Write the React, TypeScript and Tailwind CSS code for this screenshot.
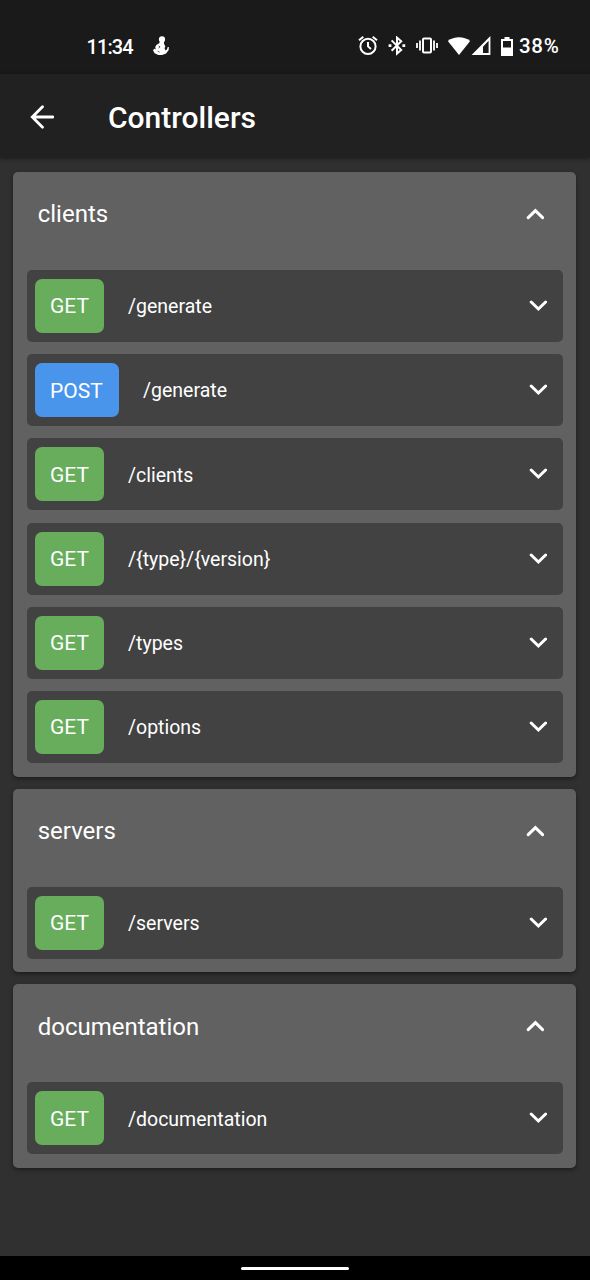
import React from "react";

type Method = "GET" | "POST";
type Endpoint = { method: Method; path: string };
type Controller = { name: string; endpoints: Endpoint[] };

const controllers: Controller[] = [
  {
    name: "clients",
    endpoints: [
      { method: "GET", path: "/generate" },
      { method: "POST", path: "/generate" },
      { method: "GET", path: "/clients" },
      { method: "GET", path: "/{type}/{version}" },
      { method: "GET", path: "/types" },
      { method: "GET", path: "/options" },
    ],
  },
  { name: "servers", endpoints: [{ method: "GET", path: "/servers" }] },
  { name: "documentation", endpoints: [{ method: "GET", path: "/documentation" }] },
];

const badgeStyle: Record<Method, string> = {
  GET: "w-[69px] bg-[#68ad5c]",
  POST: "w-[84px] bg-[#4a95ec]",
};

function Chevron({ up = false }: { up?: boolean }) {
  return (
    <svg viewBox="0 0 18 12" className="h-3 w-[18px] shrink-0" fill="none" stroke="white" strokeWidth="3" strokeLinecap="round">
      <path d={up ? "M2.2 9.6 9.4 2.6l7.2 7" : "M2.2 2 9.4 9l7.2-7"} />
    </svg>
  );
}

function StatusBar() {
  return (
    <div className="flex h-[74px] shrink-0 items-center bg-[#1a1a1a] pt-[18px] pl-[86.5px] text-[20px] font-medium">
      <span className="w-[65.5px] pt-px tracking-[-0.9px]">11:34</span>
      <svg viewBox="0 0 18 20" className="h-5 w-[18px]" fill="white">
        <circle cx="10" cy="3.4" r="3.1" />
        <path d="M8 5.5h4v2.3l1.4 2.7-.9 1.6 1 2.4 1.6-1.3.4-2 1.4-.2-.2 3-2.6 3.5-4 1.5H6.4L2.6 17.2 1 14.2l1.2-1.4 1.6.5-.6-2.2 1.4-2.3 2.6-1.5z" />
        <path d="M6.6 10 8 10.8l-1.4 1.5M5.7 15.3l1.8.8" fill="none" stroke="#1a1a1a" strokeWidth="0.7" />
      </svg>
      <div className="ml-auto flex items-center pr-[29px]">
        <svg viewBox="0 0 20 20" className="h-5 w-5" fill="none" stroke="white" strokeWidth="2">
          <circle cx="10" cy="10.4" r="7.6" />
          <path d="M10 6.1v4.3l3 2.5M1 4.2 5.3.8M19 4.2 14.7.8" />
        </svg>
        <svg viewBox="0 0 18 20" className="ml-2.5 h-5 w-[18px]" fill="none" stroke="white" strokeWidth="2">
          <path d="m3.6 4.4 9.6 9.6L9 17.6v-16l4.2 3.6-9.6 9.6" />
          <path d="M.6 9.6h2.8M14.4 9.6h2.8" strokeWidth="2.8" />
        </svg>
        <svg viewBox="0 0 22 18" className="ml-[10px] h-[18px] w-[22px]" fill="none" stroke="white" strokeWidth="2">
          <rect x="7" y="1.6" width="8" height="14" rx="1" />
          <path d="M4 3.6v10M1 6.1v5M18 3.6v10M21 6.1v5" strokeWidth="1.8" />
        </svg>
        <svg viewBox="0 0 24 19" className="ml-[9px] h-[19px] w-6" fill="white">
          <path d="M.8 4C7-1 17-1 23.2 4L12 18z" />
        </svg>
        <svg viewBox="0 0 20 20" className="h-5 w-5" fill="white">
          <path fillRule="evenodd" d="M19.4 0v19H.6zM17.6 4.7 12 10.7V17h5.6z" />
        </svg>
        <svg viewBox="0 0 12 19" className="ml-2.5 h-[19px] w-3" fill="white">
          <path fillRule="evenodd" d="M3.5 0h5v2H12v17H0V2h3.5zM2 4v6.5h8V4z" />
        </svg>
        <span className="ml-[6px] w-[42px] pt-px text-[20.5px] tracking-[0.7px] whitespace-nowrap">38%</span>
      </div>
    </div>
  );
}

function EndpointRow({ method, path }: Endpoint) {
  return (
    <div className="flex h-[72px] items-center rounded-[5px] bg-[#424242] pr-[16.5px] pl-2">
      <span className={`flex h-[54px] items-center rounded-[7px] pt-[2px] pl-[15px] text-[21px] ${badgeStyle[method]}`}>{method}</span>
      <span className="ml-6 pt-[1.6px] text-[19.5px]">{path}</span>
      <div className="ml-auto flex">
        <Chevron />
      </div>
    </div>
  );
}

function ControllerCard({ name, endpoints }: Controller) {
  return (
    <section className="rounded-[5px] bg-[#616161] pr-[13.4px] pb-[13.5px] pl-[13.7px] shadow-[0_2px_4px_rgba(0,0,0,0.4)]">
      <div className="flex h-[98px] items-start pt-6 pr-[19.5px] pl-[10.7px]">
        <h2 className="pt-[0.2px] text-[24px] leading-9">{name}</h2>
        <div className="ml-auto flex h-9 items-center">
          <Chevron up />
        </div>
      </div>
      <div className="flex flex-col gap-[12.2px]">
        {endpoints.map((e) => (
          <EndpointRow key={e.method + e.path} {...e} />
        ))}
      </div>
    </section>
  );
}

export default function App() {
  return (
    <div className="flex h-[1280px] w-[590px] flex-col overflow-hidden bg-[#303030] font-['Roboto',sans-serif] text-white">
      <StatusBar />
      <header className="z-10 flex h-[84px] shrink-0 items-center bg-[#212121] pl-[30px] shadow-[0_1px_4px_rgba(0,0,0,0.4)]">
        <svg viewBox="0 0 24 24" className="mt-[2px] h-6 w-6" fill="none" stroke="white" strokeWidth="2.8" strokeLinecap="round">
          <path d="M23 12H2.5M12.5 1.8 2.3 12l10.2 10.2" />
        </svg>
        <h1 className="ml-[54px] pt-[3px] text-[30px] font-medium">Controllers</h1>
      </header>
      <main className="flex flex-1 flex-col gap-[12.2px] pt-[14.1px] pr-[13.6px] pl-[13.3px]">
        {controllers.map((c) => (
          <ControllerCard key={c.name} {...c} />
        ))}
      </main>
      <footer className="flex h-6 shrink-0 items-center justify-center bg-black">
        <div className="mt-px h-[3px] w-[108px] rounded-full bg-white" />
      </footer>
    </div>
  );
}
